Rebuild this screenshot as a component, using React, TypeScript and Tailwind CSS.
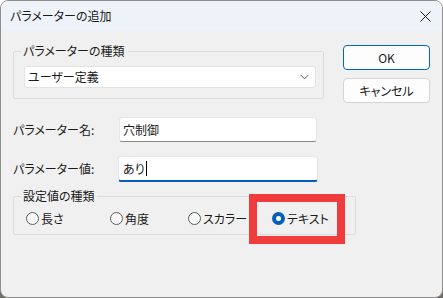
import React from "react";

const font = { fontFamily: '"Noto Sans CJK JP", "Noto Sans", sans-serif' };

function Radio({ label, checked, w }: { label: string; checked?: boolean; w: string }) {
  return (
    <div className={`flex items-center gap-[2px] ${w}`}>
      {checked ? (
        <span className="flex h-[13px] w-[13px] items-center justify-center rounded-full bg-[#005fb8]">
          <span className="h-[5px] w-[5px] rounded-full bg-white" />
        </span>
      ) : (
        <span className="h-[13px] w-[13px] rounded-full border border-[#5c5c5c] bg-[#f9f9f9]" />
      )}
      <span className="text-[12px] leading-[16px] text-[#1a1a1a]">{label}</span>
    </div>
  );
}

function GroupLabel({ children }: { children: React.ReactNode }) {
  return (
    <span className="absolute -top-[9px] left-[7px] bg-[#f0f0f0] px-[2px] text-[12px] leading-[16px] text-[#1a1a1a]">
      {children}
    </span>
  );
}

export default function App() {
  return (
    <div
      className="h-[298px] w-[443px] bg-[linear-gradient(to_bottom,#ffffff_50%,#6e6e66_50%)] [font-feature-settings:'palt']"
      style={font}
    >
      <div className="flex h-full w-full flex-col overflow-hidden rounded-[8px] border border-[#8e8e8e] bg-[#f0f0f0]">
        {/* title bar */}
        <div className="flex h-[30px] shrink-0 items-center justify-between bg-[#eef3f9] pl-[9px] pr-[10px]">
          <span className="text-[12px] leading-[16px] text-[#1a1a1a]">パラメーターの追加</span>
          <svg width="11" height="11" viewBox="0 0 11 11" className="mr-[1px]">
            <path d="M0.5 0.5L10.5 10.5M10.5 0.5L0.5 10.5" stroke="#1a1a1a" strokeWidth="1" />
          </svg>
        </div>

        {/* body */}
        <div className="flex flex-col pl-[12px]">
          <div className="flex items-start">
            <div className="relative mt-[20px] w-[311px] rounded-[2px] border border-[#dcdcdc] pb-[10px] pl-[10px] pt-[14px]">
              <GroupLabel>パラメーターの種類</GroupLabel>
              <div className="flex h-[22px] w-[292px] items-center justify-between rounded-[3px] border border-[#e3e3e3] bg-white pl-[3px] pr-[6px]">
                <span className="text-[12px] leading-[16px] text-[#1a1a1a]">ユーザー定義</span>
                <svg width="9" height="6" viewBox="0 0 9 6">
                  <path d="M0.5 0.8L4.5 4.8L8.5 0.8" fill="none" stroke="#5a5a5a" strokeWidth="1" />
                </svg>
              </div>
            </div>

            <div className="ml-[19px] mt-[14px] flex flex-col gap-[8px]">
              <button className="flex h-[25px] w-[87px] items-center justify-center rounded-[4px] border border-[#0067c0] bg-[#fdfdfd] text-[12px] leading-[16px] text-[#1a1a1a]">
                OK
              </button>
              <button className="flex h-[25px] w-[87px] items-center justify-center rounded-[4px] border border-[#d4d4d4] bg-[#fdfdfd] text-[12px] leading-[16px] text-[#1a1a1a]">
                キャンセル
              </button>
            </div>
          </div>

          <div className="mt-[14px] flex items-center">
            <span className="w-[106px] text-[12px] leading-[16px] text-[#1a1a1a]">パラメーター名:</span>
            <div className="flex h-[25px] w-[198px] items-center rounded-[3px] border border-[#e6e6e6] border-b-[#8a8a8a] bg-white pl-[3px]">
              <span className="text-[12px] leading-[16px] text-[#1a1a1a]">穴制御</span>
            </div>
          </div>

          <div className="mt-[14px] flex items-center">
            <span className="w-[105px] text-[12px] leading-[16px] text-[#1a1a1a]">パラメーター値:</span>
            <div className="flex h-[26px] w-[200px] items-center rounded-[3px] border border-[#e6e6e6] border-b-2 border-b-[#005fb8] bg-white pl-[4px]">
              <span className="text-[12px] leading-[16px] text-[#1a1a1a]">あり</span>
              <span className="ml-[1px] h-[15px] w-px bg-black" />
            </div>
          </div>

          <div className="relative mt-[14px] flex h-[39px] w-[343px] items-center rounded-[2px] border border-[#dcdcdc] pl-[12px] pt-[6px]">
            <GroupLabel>設定値の種類</GroupLabel>
            <Radio label="長さ" w="w-[84px]" />
            <Radio label="角度" w="w-[78px]" />
            <Radio label="スカラー" w="w-[84px]" />
            <Radio label="テキスト" checked w="w-[70px]" />

            {/* red highlight annotation */}
            <div className="pointer-events-none absolute -top-[3px] left-[235px] h-[50px] w-[96px] border-[8px] border-[#f03c3c]" />
          </div>
        </div>
      </div>
    </div>
  );
}
